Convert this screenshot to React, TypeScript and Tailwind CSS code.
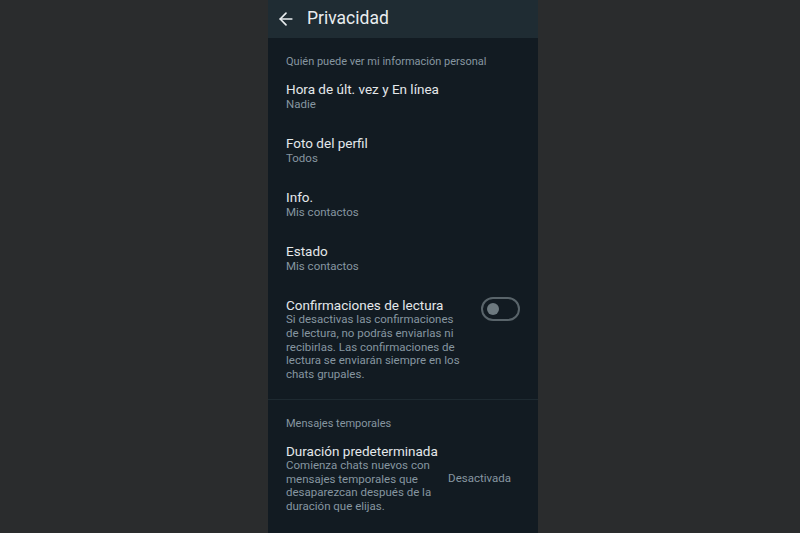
import { ArrowLeft } from "lucide-react";

type Setting = { title: string; value: string };

const personal: Setting[] = [
  { title: "Hora de últ. vez y En línea", value: "Nadie" },
  { title: "Foto del perfil", value: "Todos" },
  { title: "Info.", value: "Mis contactos" },
  { title: "Estado", value: "Mis contactos" },
];

function SectionLabel({ children }: { children: string }) {
  return (
    <p className="px-[18px] text-[11px] leading-[14px] text-[#8696a0]">
      {children}
    </p>
  );
}

export default function App() {
  return (
    <div
      className="flex h-screen w-full overflow-hidden bg-[#2a2c2d]"
      style={{ fontFamily: "Roboto, 'Noto Sans', sans-serif" }}
    >
      <div className="ml-[268px] flex w-[270px] flex-col">
        {/* Top bar */}
        <div className="flex h-[38px] shrink-0 items-center bg-[#1f2c33] pl-[8px]">
          <ArrowLeft size={20} strokeWidth={2} className="text-[#e9edef]" />
          <h1 className="ml-[11px] text-[17.5px] leading-none text-[#e9edef]">
            Privacidad
          </h1>
        </div>

        {/* Settings list */}
        <div className="flex-1 bg-[#121b22]">
          <div className="pt-[17px]">
            <SectionLabel>Quién puede ver mi información personal</SectionLabel>
            {personal.map((item) => (
              <div key={item.title} className="px-[18px] py-[12px]">
                <p className="text-[13.5px] leading-[16px] text-[#e4e8ea]">
                  {item.title}
                </p>
                <p className="text-[11.5px] leading-[14px] text-[#8696a0]">
                  {item.value}
                </p>
              </div>
            ))}

            {/* Read receipts with switch */}
            <div className="flex items-start justify-between pb-[17px] pl-[18px] pr-[18px] pt-[12px]">
              <div className="w-[180px]">
                <p className="text-[13.5px] leading-[16px] text-[#e4e8ea]">
                  Confirmaciones de lectura
                </p>
                <p className="text-[11.5px] leading-[13.75px] text-[#8696a0]">
                  Si desactivas las confirmaciones de lectura, no podrás
                  enviarlas ni recibirlas. Las confirmaciones de lectura se
                  enviarán siempre en los chats grupales.
                </p>
              </div>
              <div className="flex h-[24px] w-[39px] items-center rounded-full border-2 border-[#59646a] pl-[4px]">
                <div className="h-[12px] w-[12px] rounded-full bg-[#6d797f]" />
              </div>
            </div>
          </div>

          <div className="h-px bg-[#1e2a31]" />

          <div className="pt-[17px]">
            <SectionLabel>Mensajes temporales</SectionLabel>
            <div className="flex items-center justify-between px-[18px] pt-[12px] pb-[12px]">
              <div className="w-[156px]">
                <p className="whitespace-nowrap text-[13.5px] leading-[16px] text-[#e4e8ea]">
                  Duración predeterminada
                </p>
                <p className="text-[11.5px] leading-[13.75px] text-[#8696a0]">
                  Comienza chats nuevos con mensajes temporales que
                  desaparezcan después de la duración que elijas.
                </p>
              </div>
              <span className="pr-[9px] text-[11.5px] leading-[14px] text-[#8696a0]">
                Desactivada
              </span>
            </div>
          </div>
        </div>
      </div>
    </div>
  );
}
